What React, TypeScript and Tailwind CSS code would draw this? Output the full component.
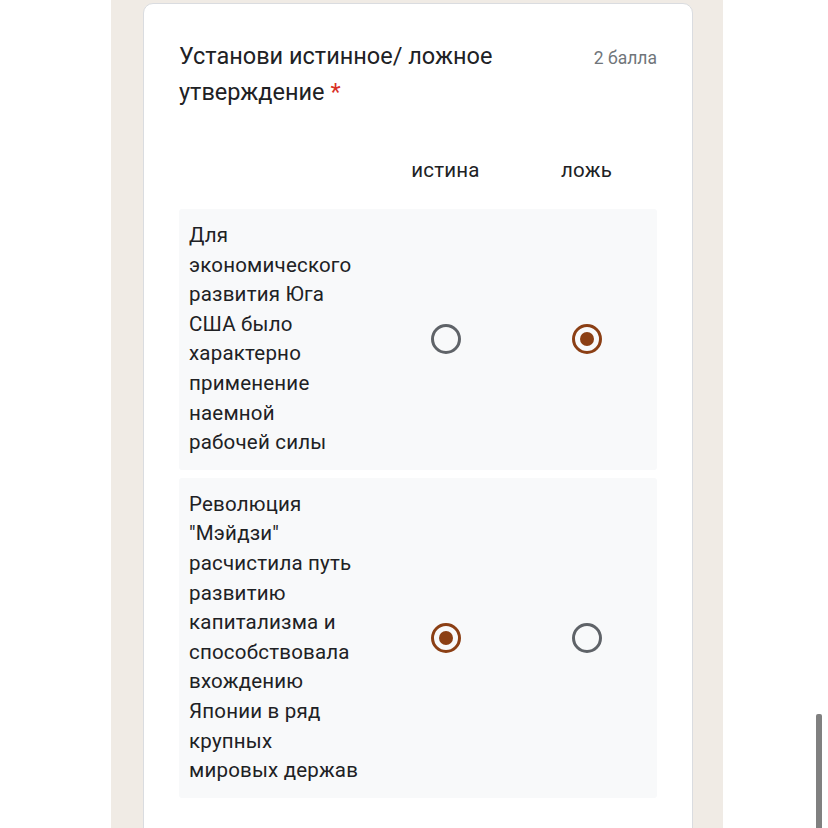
import React from "react";

function Radio({ checked }: { checked: boolean }) {
  return checked ? (
    <div className="w-[30px] h-[30px] rounded-full border-[3px] border-[#8b3f14] flex items-center justify-center">
      <div className="w-[14px] h-[14px] rounded-full bg-[#8b3f14]" />
    </div>
  ) : (
    <div className="w-[30px] h-[30px] rounded-full border-[3px] border-[#5f6368]" />
  );
}

function Row({ label, sel }: { label: string[]; sel: number }) {
  return (
    <div className="flex bg-[#f8f9fa] rounded-[3px]">
      <div className="w-[196px] pl-[10px] pr-[4px] py-[12px] text-[20.5px] leading-[29.6px] tracking-[0.2px] text-[#202124]">
        {label.map((l, i) => (
          <div key={i} className="whitespace-nowrap">{l}</div>
        ))}
      </div>
      <div className="w-[141px] flex items-center justify-center">
        <Radio checked={sel === 0} />
      </div>
      <div className="w-[141px] flex items-center justify-center">
        <Radio checked={sel === 1} />
      </div>
    </div>
  );
}

export default function App() {
  return (
    <div
      className="relative w-[828px] h-[828px] overflow-hidden bg-white"
      style={{ fontFamily: "Roboto, 'Noto Sans', sans-serif" }}
    >
      <div className="ml-[111px] w-[612px] h-[828px] bg-[#f0ebe5] pt-[3px] pl-[32px] pr-[30px]">
        <div className="bg-white border border-[#dadce0] rounded-t-[10px] h-[900px] pt-[34px] px-[35px]">
          <div className="flex justify-between items-start">
            <div className="text-[23.5px] leading-[36px] text-[#202124] w-[360px]">
              Установи истинное/ ложное утверждение{" "}
              <span className="text-[#d93025]">*</span>
            </div>
            <div className="text-[17.5px] leading-[36px] text-[#70757a] pt-[2px]">2 балла</div>
          </div>
          <div className="mt-[40px] h-[40px] mb-[19px] flex text-[20.5px] tracking-[0.2px] text-[#202124]">
            <div className="w-[196px]" />
            <div className="w-[141px] flex items-center justify-center">истина</div>
            <div className="w-[141px] flex items-center justify-center">ложь</div>
          </div>
          <div className="flex flex-col gap-[8px]">
            <Row
              sel={1}
              label={[
                "Для",
                "экономического",
                "развития Юга",
                "США было",
                "характерно",
                "применение",
                "наемной",
                "рабочей силы",
              ]}
            />
            <Row
              sel={0}
              label={[
                "Революция",
                "\"Мэйдзи\"",
                "расчистила путь",
                "развитию",
                "капитализма и",
                "способствовала",
                "вхождению",
                "Японии в ряд",
                "крупных",
                "мировых держав",
              ]}
            />
          </div>
        </div>
      </div>
      <div className="absolute left-[816px] top-[714px] w-[6px] h-[114px] bg-[#808080] rounded-t-[2px]" />
    </div>
  );
}
